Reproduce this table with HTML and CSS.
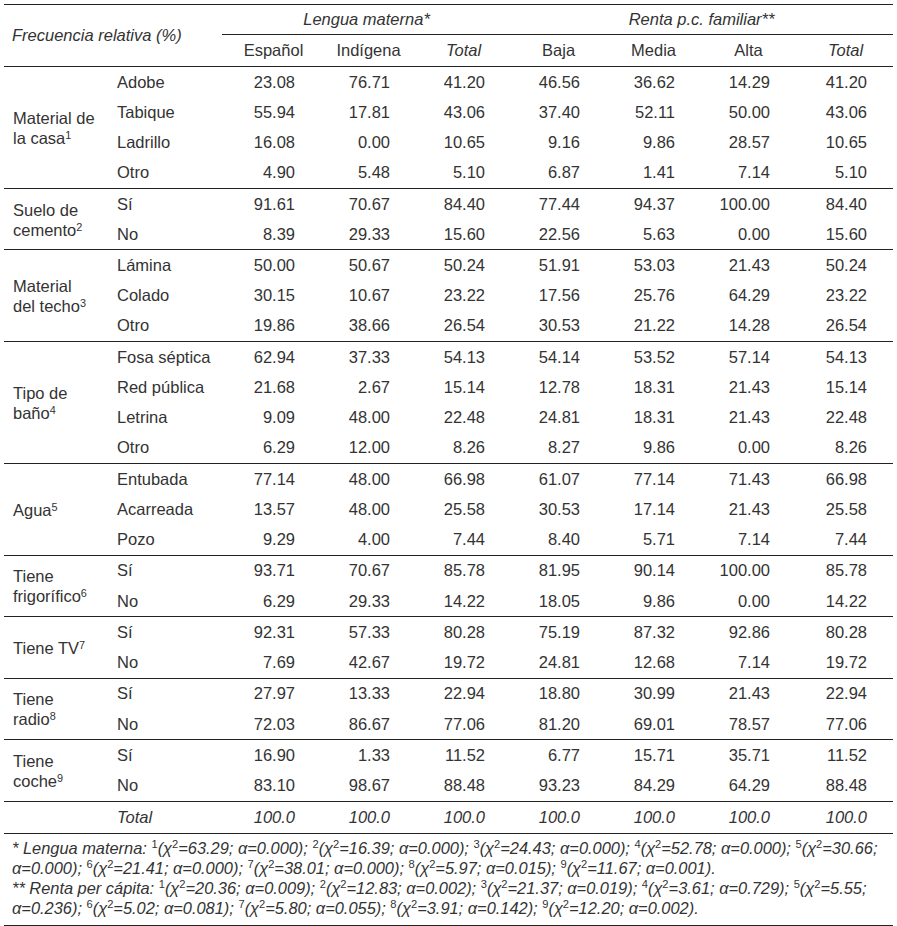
FILE: index.html
```html
<!DOCTYPE html>
<html lang="es">
<head>
<meta charset="utf-8">
<title>Frecuencia relativa</title>
<link rel="stylesheet" href="styles.css">
</head>
<body>
<table class="tbl">
  <colgroup>
    <col class="c-lab"><col class="c-sub"><col class="c-esp">
    <col class="c-n"><col class="c-n"><col class="c-n"><col class="c-n"><col class="c-n">
    <col class="c-last">
  </colgroup>
  <thead>
    <tr class="h1">
      <th class="freq" colspan="2" rowspan="2">Frecuencia relativa (%)</th>
      <th class="grp grp-l" colspan="3">Lengua materna*</th>
      <th class="grp grp-r" colspan="4">Renta p.c. familiar**</th>
    </tr>
    <tr class="h2">
      <th>Español</th><th>Indígena</th><th class="it">Total</th>
      <th>Baja</th><th>Media</th><th>Alta</th><th class="it">Total</th>
    </tr>
  </thead>
  <tbody>
    <tr><td class="lab" rowspan="4">Material de<br>la casa<sup>1</sup></td><td class="sub">Adobe</td><td class="n">23.08</td><td class="n">76.71</td><td class="n">41.20</td><td class="n">46.56</td><td class="n">36.62</td><td class="n">14.29</td><td class="n">41.20</td></tr>
    <tr><td class="sub">Tabique</td><td class="n">55.94</td><td class="n">17.81</td><td class="n">43.06</td><td class="n">37.40</td><td class="n">52.11</td><td class="n">50.00</td><td class="n">43.06</td></tr>
    <tr><td class="sub">Ladrillo</td><td class="n">16.08</td><td class="n">0.00</td><td class="n">10.65</td><td class="n">9.16</td><td class="n">9.86</td><td class="n">28.57</td><td class="n">10.65</td></tr>
    <tr><td class="sub">Otro</td><td class="n">4.90</td><td class="n">5.48</td><td class="n">5.10</td><td class="n">6.87</td><td class="n">1.41</td><td class="n">7.14</td><td class="n">5.10</td></tr>
  </tbody>
  <tbody>
    <tr><td class="lab" rowspan="2">Suelo de<br>cemento<sup>2</sup></td><td class="sub">Sí</td><td class="n">91.61</td><td class="n">70.67</td><td class="n">84.40</td><td class="n">77.44</td><td class="n">94.37</td><td class="n">100.00</td><td class="n">84.40</td></tr>
    <tr><td class="sub">No</td><td class="n">8.39</td><td class="n">29.33</td><td class="n">15.60</td><td class="n">22.56</td><td class="n">5.63</td><td class="n">0.00</td><td class="n">15.60</td></tr>
  </tbody>
  <tbody>
    <tr><td class="lab" rowspan="3">Material<br>del techo<sup>3</sup></td><td class="sub">Lámina</td><td class="n">50.00</td><td class="n">50.67</td><td class="n">50.24</td><td class="n">51.91</td><td class="n">53.03</td><td class="n">21.43</td><td class="n">50.24</td></tr>
    <tr><td class="sub">Colado</td><td class="n">30.15</td><td class="n">10.67</td><td class="n">23.22</td><td class="n">17.56</td><td class="n">25.76</td><td class="n">64.29</td><td class="n">23.22</td></tr>
    <tr><td class="sub">Otro</td><td class="n">19.86</td><td class="n">38.66</td><td class="n">26.54</td><td class="n">30.53</td><td class="n">21.22</td><td class="n">14.28</td><td class="n">26.54</td></tr>
  </tbody>
  <tbody>
    <tr><td class="lab" rowspan="4">Tipo de<br>baño<sup>4</sup></td><td class="sub">Fosa séptica</td><td class="n">62.94</td><td class="n">37.33</td><td class="n">54.13</td><td class="n">54.14</td><td class="n">53.52</td><td class="n">57.14</td><td class="n">54.13</td></tr>
    <tr><td class="sub">Red pública</td><td class="n">21.68</td><td class="n">2.67</td><td class="n">15.14</td><td class="n">12.78</td><td class="n">18.31</td><td class="n">21.43</td><td class="n">15.14</td></tr>
    <tr><td class="sub">Letrina</td><td class="n">9.09</td><td class="n">48.00</td><td class="n">22.48</td><td class="n">24.81</td><td class="n">18.31</td><td class="n">21.43</td><td class="n">22.48</td></tr>
    <tr><td class="sub">Otro</td><td class="n">6.29</td><td class="n">12.00</td><td class="n">8.26</td><td class="n">8.27</td><td class="n">9.86</td><td class="n">0.00</td><td class="n">8.26</td></tr>
  </tbody>
  <tbody>
    <tr><td class="lab" rowspan="3">Agua<sup>5</sup></td><td class="sub">Entubada</td><td class="n">77.14</td><td class="n">48.00</td><td class="n">66.98</td><td class="n">61.07</td><td class="n">77.14</td><td class="n">71.43</td><td class="n">66.98</td></tr>
    <tr><td class="sub">Acarreada</td><td class="n">13.57</td><td class="n">48.00</td><td class="n">25.58</td><td class="n">30.53</td><td class="n">17.14</td><td class="n">21.43</td><td class="n">25.58</td></tr>
    <tr><td class="sub">Pozo</td><td class="n">9.29</td><td class="n">4.00</td><td class="n">7.44</td><td class="n">8.40</td><td class="n">5.71</td><td class="n">7.14</td><td class="n">7.44</td></tr>
  </tbody>
  <tbody>
    <tr><td class="lab" rowspan="2">Tiene<br>frigorífico<sup>6</sup></td><td class="sub">Sí</td><td class="n">93.71</td><td class="n">70.67</td><td class="n">85.78</td><td class="n">81.95</td><td class="n">90.14</td><td class="n">100.00</td><td class="n">85.78</td></tr>
    <tr><td class="sub">No</td><td class="n">6.29</td><td class="n">29.33</td><td class="n">14.22</td><td class="n">18.05</td><td class="n">9.86</td><td class="n">0.00</td><td class="n">14.22</td></tr>
  </tbody>
  <tbody>
    <tr><td class="lab" rowspan="2">Tiene TV<sup>7</sup></td><td class="sub">Sí</td><td class="n">92.31</td><td class="n">57.33</td><td class="n">80.28</td><td class="n">75.19</td><td class="n">87.32</td><td class="n">92.86</td><td class="n">80.28</td></tr>
    <tr><td class="sub">No</td><td class="n">7.69</td><td class="n">42.67</td><td class="n">19.72</td><td class="n">24.81</td><td class="n">12.68</td><td class="n">7.14</td><td class="n">19.72</td></tr>
  </tbody>
  <tbody>
    <tr><td class="lab" rowspan="2">Tiene<br>radio<sup>8</sup></td><td class="sub">Sí</td><td class="n">27.97</td><td class="n">13.33</td><td class="n">22.94</td><td class="n">18.80</td><td class="n">30.99</td><td class="n">21.43</td><td class="n">22.94</td></tr>
    <tr><td class="sub">No</td><td class="n">72.03</td><td class="n">86.67</td><td class="n">77.06</td><td class="n">81.20</td><td class="n">69.01</td><td class="n">78.57</td><td class="n">77.06</td></tr>
  </tbody>
  <tbody>
    <tr><td class="lab" rowspan="2">Tiene<br>coche<sup>9</sup></td><td class="sub">Sí</td><td class="n">16.90</td><td class="n">1.33</td><td class="n">11.52</td><td class="n">6.77</td><td class="n">15.71</td><td class="n">35.71</td><td class="n">11.52</td></tr>
    <tr><td class="sub">No</td><td class="n">83.10</td><td class="n">98.67</td><td class="n">88.48</td><td class="n">93.23</td><td class="n">84.29</td><td class="n">64.29</td><td class="n">88.48</td></tr>
  </tbody>
  <tbody class="total">
    <tr><td class="lab"></td><td class="sub">Total</td><td class="n">100.0</td><td class="n">100.0</td><td class="n">100.0</td><td class="n">100.0</td><td class="n">100.0</td><td class="n">100.0</td><td class="n">100.0</td></tr>
  </tbody>
  <tfoot>
    <tr><td class="notes" colspan="9">* Lengua materna: <sup>1</sup>(χ<sup>2</sup>=63.29; α=0.000); <sup>2</sup>(χ<sup>2</sup>=16.39; α=0.000); <sup>3</sup>(χ<sup>2</sup>=24.43; α=0.000); <sup>4</sup>(χ<sup>2</sup>=52.78; α=0.000); <sup>5</sup>(χ<sup>2</sup>=30.66;<br>α=0.000); <sup>6</sup>(χ<sup>2</sup>=21.41; α=0.000); <sup>7</sup>(χ<sup>2</sup>=38.01; α=0.000); <sup>8</sup>(χ<sup>2</sup>=5.97; α=0.015); <sup>9</sup>(χ<sup>2</sup>=11.67; α=0.001).<br>** Renta per cápita: <sup>1</sup>(χ<sup>2</sup>=20.36; α=0.009); <sup>2</sup>(χ<sup>2</sup>=12.83; α=0.002); <sup>3</sup>(χ<sup>2</sup>=21.37; α=0.019); <sup>4</sup>(χ<sup>2</sup>=3.61; α=0.729); <sup>5</sup>(χ<sup>2</sup>=5.55;<br>α=0.236); <sup>6</sup>(χ<sup>2</sup>=5.02; α=0.081); <sup>7</sup>(χ<sup>2</sup>=5.80; α=0.055); <sup>8</sup>(χ<sup>2</sup>=3.91; α=0.142); <sup>9</sup>(χ<sup>2</sup>=12.20; α=0.002).</td></tr>
  </tfoot>
</table>
</body>
</html>
```
FILE: styles.css
```css
html, body {
  margin: 0;
  padding: 0;
  background: #fff;
}
body {
  font-family: "Liberation Sans", Arial, sans-serif;
  font-size: 16.5px;
  color: #333;
}
.tbl {
  margin: 4px 0 0 4px;
  width: 889px;
  table-layout: fixed;
  border-collapse: collapse;
  border-top: 1px solid #222;
}
.c-lab { width: 108px; }
.c-sub { width: 110px; }
.c-esp { width: 85px; }
.c-n { width: 95px; }
.c-last { width: 111px; }

th {
  font-weight: normal;
  padding: 0;
  white-space: nowrap;
}
.h1 th { height: 29px; }
.h2 th { height: 31px; }
.freq {
  font-style: italic;
  text-align: left;
  padding-left: 8px;
  vertical-align: middle;
  border-bottom: 1px solid #222;
}
.grp {
  font-style: italic;
  text-align: center;
  border-bottom: 1px solid #222;
}
.grp-l { padding-left: 14px; }
.grp-r { padding-left: 13px; }
.h2 th {
  text-align: center;
  padding-left: 28px;
  padding-right: 0;
  border-bottom: 1px solid #222;
}
.h2 th:first-child { padding-left: 18px; }
.h2 th:last-child { padding-left: 16px; }
.it { font-style: italic; }

td {
  height: 30.24px;
  padding: 0;
  vertical-align: middle;
  white-space: nowrap;
}
tbody {
  border-bottom: 1px solid #222;
}
.lab {
  padding-left: 9px;
  line-height: 20px;
  padding-top: 1px;
}
.sub {
  padding-left: 5px;
}
.n {
  text-align: right;
  padding-right: 12px;
}
.n:last-child {
  padding-right: 26px;
}
.total td { font-style: italic; }
sup {
  font-size: 0.66em;
  line-height: 0;
  vertical-align: 0.5em;
}
.notes {
  font-style: italic;
  font-size: 16.4px;
  line-height: 20px;
  padding: 4px 0 7px 8px;
  border-bottom: 1px solid #222;
}
.notes sup {
  font-style: normal;
  font-size: 0.68em;
}
```
